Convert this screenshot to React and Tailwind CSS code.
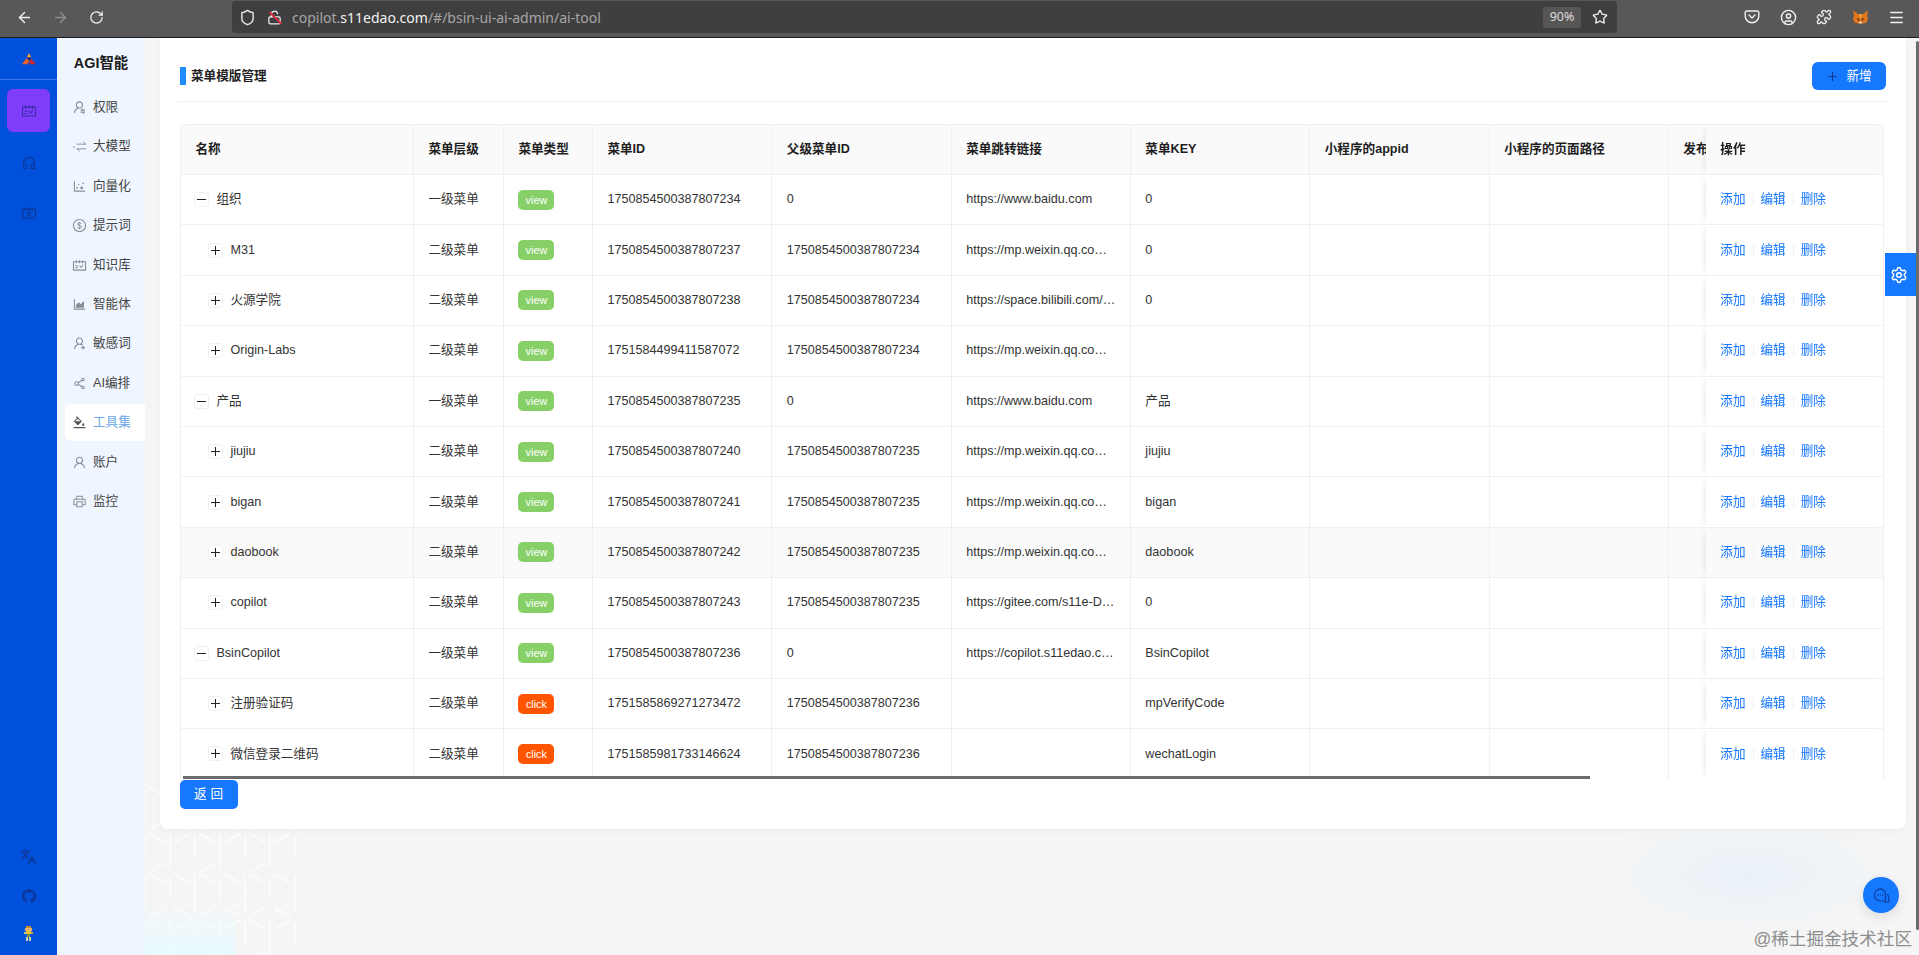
import React from "react";
import { ArrowLeft, ArrowRight, RotateCw, Shield, LockOpen, Star, CircleUser, Puzzle, Menu, Settings, Languages } from "lucide-react";
import {
  AiOutlineUserSwitch, AiOutlineDotChart, AiOutlineDollar, AiOutlineSchedule, AiOutlineAreaChart,
  AiOutlineUserAdd, AiOutlineShareAlt, AiOutlineBgColors, AiOutlineUser, AiOutlinePrinter,
  AiOutlineCustomerService, AiOutlineContacts, AiFillGithub, AiOutlinePlus,
} from "react-icons/ai";

const SwapIcon = (p) => (
  <svg viewBox="0 0 16 16" fill="none" stroke="currentColor" strokeWidth="1" {...p}>
    <path d="M5 5.5h10M12 3l2.6 2.5M1 8.5h2M5 10.5h10M8 13L5.4 10.5" />
  </svg>
);

const Logo = () => (
  <svg viewBox="0 0 18 16" className="w-4 h-[14px]">
    <path d="M9 1l2.5 5H6.5z" fill="#f59e2c" />
    <path d="M6 7l-5 7h6l3-4z" fill="#e8622a" />
    <path d="M11 7l6 7H9z" fill="#c9252d" />
    <path d="M6.5 6.5h5l-2.5 4z" fill="#2d2a6e" />
  </svg>
);

const Avatar = () => (
  <svg viewBox="0 0 12 16" className="w-[11px] h-[17px]" shapeRendering="crispEdges">
    <rect x="3" y="0" width="6" height="2" fill="#c98a2b" />
    <rect x="2" y="2" width="8" height="3" fill="#e2b56a" />
    <rect x="3" y="5" width="6" height="4" fill="#e8c23a" />
    <rect x="1" y="6" width="2" height="3" fill="#b9c98a" />
    <rect x="9" y="6" width="2" height="3" fill="#d9a531" />
    <rect x="4" y="9" width="4" height="3" fill="#7a8f3c" />
    <rect x="3" y="12" width="2" height="4" fill="#cfe0a0" />
    <rect x="7" y="12" width="2" height="4" fill="#cfe0a0" />
  </svg>
);

const Fox = () => (
  <svg viewBox="0 0 18 16" className="w-[17px] h-[16px]">
    <path d="M1 1l6 4h4l6-4-1 6 1 3-2 4-4 1H7l-4-1-2-4 1-3z" fill="#e2761b" />
    <path d="M5 9l3 1-1 3zM13 9l-3 1 1 3z" fill="#5b3a1e" />
    <path d="M7 13h4l-1 2H8z" fill="#f0d9c0" />
    <path d="M7 5h4l-2 4z" fill="#f6a14a" />
  </svg>
);

const Pocket = () => (
  <svg viewBox="0 0 16 16" fill="none" stroke="#f0f0f0" strokeWidth="1.4" className="w-4 h-4">
    <path d="M2.5 2h11a1.3 1.3 0 0 1 1.3 1.3V7a6.8 6.8 0 0 1-13.6 0V3.3A1.3 1.3 0 0 1 2.5 2z" />
    <path d="M5 6l3 3 3-3" strokeLinecap="round" strokeLinejoin="round" />
  </svg>
);

const ChatIcon = () => (
  <svg viewBox="0 0 18 18" fill="none" stroke="#0a3f9e" strokeWidth="1.2" className="w-[17px] h-[17px]">
    <path d="M8 2a6.4 6.4 0 1 0 0 12.8h5.2v-6.4A6.4 6.4 0 0 0 8 2z" />
    <path d="M15 7.5a4.6 4.6 0 0 1 1.6 3.4v5h-4.8" />
    <path d="M5.4 8.4h.1M8 8.4h.1M10.6 8.4h.1" strokeWidth="1.5" strokeLinecap="round" />
  </svg>
);

const menu = [
  ["权限", AiOutlineUserSwitch],
  ["大模型", SwapIcon],
  ["向量化", AiOutlineDotChart],
  ["提示词", AiOutlineDollar],
  ["知识库", AiOutlineSchedule],
  ["智能体", AiOutlineAreaChart],
  ["敏感词", AiOutlineUserAdd],
  ["AI编排", AiOutlineShareAlt],
  ["工具集", AiOutlineBgColors, true],
  ["账户", AiOutlineUser],
  ["监控", AiOutlinePrinter],
];

const U = "https://mp.weixin.qq.com/s/bsin-copilot-menu-template";
const rows = [
  { l: 1, name: "组织", level: "一级菜单", type: "view", id: "1750854500387807234", pid: "0", url: "https://www.baidu.com", key: "0" },
  { l: 2, name: "M31", level: "二级菜单", type: "view", id: "1750854500387807237", pid: "1750854500387807234", url: U, key: "0" },
  { l: 2, name: "火源学院", level: "二级菜单", type: "view", id: "1750854500387807238", pid: "1750854500387807234", url: "https://space.bilibili.com/1234567890/video", key: "0" },
  { l: 2, name: "Origin-Labs", level: "二级菜单", type: "view", id: "1751584499411587072", pid: "1750854500387807234", url: U, key: "" },
  { l: 1, name: "产品", level: "一级菜单", type: "view", id: "1750854500387807235", pid: "0", url: "https://www.baidu.com", key: "产品" },
  { l: 2, name: "jiujiu", level: "二级菜单", type: "view", id: "1750854500387807240", pid: "1750854500387807235", url: U, key: "jiujiu" },
  { l: 2, name: "bigan", level: "二级菜单", type: "view", id: "1750854500387807241", pid: "1750854500387807235", url: U, key: "bigan" },
  { l: 2, name: "daobook", level: "二级菜单", type: "view", id: "1750854500387807242", pid: "1750854500387807235", url: U, key: "daobook", hover: true },
  { l: 2, name: "copilot", level: "二级菜单", type: "view", id: "1750854500387807243", pid: "1750854500387807235", url: "https://gitee.com/s11e-DAO/bsin-copilot", key: "0" },
  { l: 1, name: "BsinCopilot", level: "一级菜单", type: "view", id: "1750854500387807236", pid: "0", url: "https://copilot.s11edao.com/#/bsin-ui", key: "BsinCopilot" },
  { l: 2, name: "注册验证码", level: "二级菜单", type: "click", id: "1751585869271273472", pid: "1750854500387807236", url: "", key: "mpVerifyCode" },
  { l: 2, name: "微信登录二维码", level: "二级菜单", type: "click", id: "1751585981733146624", pid: "1750854500387807236", url: "", key: "wechatLogin" },
];

const heads = ["名称", "菜单层级", "菜单类型", "菜单ID", "父级菜单ID", "菜单跳转链接", "菜单KEY", "小程序的appid", "小程序的页面路径", "发布"];

const th = "h-[50px] px-[14.4px] text-left font-semibold text-[12.6px] text-[#1f1f1f] bg-[#fafafa] border-b border-r border-[#f0f0f0] whitespace-nowrap overflow-hidden";
const cell = "px-[14.4px] text-[12.6px] border-b border-r border-[#f0f0f0] whitespace-nowrap overflow-hidden text-ellipsis";
const td = `${cell} text-[#333333]`;

function Expander({ open }) {
  return (
    <span className="w-[15px] h-[15px] rounded-[3px] border border-[#f0f0f0] bg-white flex items-center justify-center shrink-0 relative">
      <span className="w-[9px] h-px bg-[#222222]" />
      {!open && <span className="absolute w-px h-[9px] bg-[#222222]" />}
    </span>
  );
}

function Row({ r }) {
  const bg = r.hover ? "bg-[#fafafa]" : "bg-white";
  return (
    <tr className="h-[50.4px]">
      <td className={`${td} ${bg}`}>
        <div className={`flex items-center ${r.l === 1 ? "gap-[7px]" : "gap-[7px] pl-[14px]"}`}>
          <Expander open={r.l === 1} />
          <span>{r.name}</span>
        </div>
      </td>
      <td className={`${td} ${bg}`}>{r.level}</td>
      <td className={`${td} ${bg}`}>
        <span className={`inline-flex items-center justify-center w-9 h-5 rounded-[5px] text-[10.8px] text-white align-middle ${r.type === "view" ? "bg-[#87d068]" : "bg-[#ff5500]"}`}>
          {r.type}
        </span>
      </td>
      <td className={`${td} ${bg}`}>{r.id}</td>
      <td className={`${td} ${bg}`}>{r.pid}</td>
      <td className={`${td} ${bg}`}>{r.url}</td>
      <td className={`${td} ${bg}`}>{r.key}</td>
      <td className={`${td} ${bg}`}></td>
      <td className={`${td} ${bg}`}></td>
      <td className={`${td} ${bg}`}></td>
      <td className={`${cell} ${bg} sticky right-0 shadow-[-6px_0_6px_-4px_rgba(0,0,0,0.07)] text-[#1677ff] overflow-visible`}>
        <div className="flex items-center">
          <span>添加</span>
          <span className="w-px h-[11px] bg-[#f0f0f0] mx-[7px]" />
          <span>编辑</span>
          <span className="w-px h-[11px] bg-[#f0f0f0] mx-[7px]" />
          <span>删除</span>
        </div>
      </td>
    </tr>
  );
}

export default function App() {
  return (
    <div className="h-screen w-full flex flex-col overflow-hidden font-['Liberation_Sans','Noto_Sans_CJK_SC',sans-serif]">
      {/* browser toolbar */}
      <div className="h-[38px] shrink-0 bg-[#585858] border-b border-[#1c1c1c] flex items-start pl-[6px] pr-[5px] font-['Noto_Sans','Noto_Sans_CJK_SC',sans-serif]">
        <div className="w-9 h-[34px] flex items-center justify-center"><ArrowLeft size={17} color="#f2f2f2" /></div>
        <div className="w-9 h-[34px] flex items-center justify-center"><ArrowRight size={17} color="#8f8f8f" /></div>
        <div className="w-9 h-[34px] flex items-center justify-center"><RotateCw size={15} color="#f2f2f2" /></div>
        <div className="ml-[118px] mt-px w-[1385px] h-[32px] bg-[#3f3f3f] rounded-[4px] flex items-center pl-[7px] pr-[7px]">
          <Shield size={17} color="#e6e6e6" />
          <span className="relative ml-[11px] w-[15px] flex justify-center">
            <LockOpen size={15} color="#eeeeee" />
            <span className="absolute left-0 top-[7px] w-[17px] h-[1.5px] bg-[#d8293f] rotate-45" />
          </span>
          <span className="ml-[10px] text-[14px] text-[#a6a6a6] whitespace-nowrap">
            copilot.<span className="text-[#f2f2f2]">s11edao.com</span>/#/bsin-ui-ai-admin/ai-tool
          </span>
          <span className="ml-auto w-[38px] h-[21px] rounded-[3px] bg-[#565656] text-[12.5px] text-[#dddddd] flex items-center justify-center">90%</span>
          <Star size={16} color="#eeeeee" className="ml-[11px] mr-[2px]" />
        </div>
        <div className="ml-auto flex">
          <div className="w-9 h-[34px] flex items-center justify-center"><Pocket /></div>
          <div className="w-9 h-[34px] flex items-center justify-center"><CircleUser size={17} color="#f0f0f0" /></div>
          <div className="w-9 h-[34px] flex items-center justify-center"><Puzzle size={16} color="#f0f0f0" /></div>
          <div className="w-9 h-[34px] flex items-center justify-center"><Fox /></div>
          <div className="w-9 h-[34px] flex items-center justify-center"><Menu size={17} color="#f0f0f0" /></div>
        </div>
      </div>

      <div className="flex-1 min-h-0 flex">
        {/* icon rail */}
        <div className="w-[57px] shrink-0 bg-[#0050dc] flex flex-col items-center">
          <div className="w-full h-[42px] flex items-center justify-center border-b border-[#3b78e8]"><Logo /></div>
          <div className="mt-[9px] w-[43px] h-[43px] rounded-[6px] bg-[#7f3dfb] flex items-center justify-center">
            <AiOutlineSchedule size={16} color="#3d2aa8" />
          </div>
          <div className="mt-[9px] w-[43px] h-[43px] flex items-center justify-center"><AiOutlineCustomerService size={16} color="#0d3697" /></div>
          <div className="mt-[7px] w-[43px] h-[43px] flex items-center justify-center"><AiOutlineContacts size={16} color="#0d3697" /></div>
          <div className="mt-auto flex flex-col items-center pb-[13px]">
            <Languages size={17} color="#0d3697" />
            <AiFillGithub size={16} color="#0d3697" className="mt-[23px]" />
            <div className="mt-[21px]"><Avatar /></div>
          </div>
        </div>

        {/* sub menu */}
        <div className="w-[88px] shrink-0 bg-[#eff6ff] flex flex-col items-stretch pl-[8px]">
          <div className="h-[51px] flex items-center justify-center pr-[8px] text-[14.4px] font-semibold text-[#1c1c1c]">AGI智能</div>
          {menu.map(([t, Icon, active]) => (
            <div
              key={t}
              className={`h-[37px] mb-[2.4px] flex items-center pl-[7px] gap-[6px] rounded-l-[6px] text-[12.6px] ${active ? "bg-white text-[#6aa6e6]" : "text-[#444444]"}`}
            >
              <Icon className={`w-[15px] h-[15px] ${active ? "text-[#555555]" : "text-[#8a8f96]"}`} />
              <span>{t}</span>
            </div>
          ))}
        </div>

        {/* main pane */}
        <div className="relative flex-1 min-w-0 bg-[#f5f5f5] pl-[15px] overflow-hidden">
          {/* decorative backdrop */}
          <svg className="absolute left-0 bottom-0 w-[155px] h-[170px]" aria-hidden="true">
            <defs>
              <pattern id="hex" width="50" height="86.6" patternUnits="userSpaceOnUse">
                <path
                  d="M0 4v36M25 47v36M50 4v36M4 45l17-10M29 2l17 10M29 41l17-10M4 2l17 10M4 88l17-10M46 45L29 35M29 58l17-10M21 58L4 48M25 6v22M0 50v22M50 50v22"
                  fill="none"
                  stroke="#ffffff"
                  strokeWidth="1.6"
                  opacity="0.7"
                />
              </pattern>
              <linearGradient id="cy" x1="0" y1="1" x2="0" y2="0">
                <stop offset="0" stopColor="#e8fbff" />
                <stop offset="0.3" stopColor="#e8fbff" stopOpacity="0" />
              </linearGradient>
            </defs>
            <rect width="155" height="170" fill="url(#hex)" />
            <rect width="90" height="170" fill="url(#cy)" />
          </svg>
          <div className="absolute right-[10px] bottom-[15px] w-[320px] h-[130px] bg-[radial-gradient(closest-side,#e9f1f8,#f5f5f500)]" />

          {/* card */}
          <div className="relative w-[1746px] h-[791px] bg-white rounded-b-[8px] shadow-[0_2px_8px_rgba(0,0,0,0.03)] px-[20px]">
            <div className="-mx-[2px] px-[2px] h-[64px] pt-[13px] border-b border-[#f0f0f0] flex items-center justify-between">
              <div className="flex items-center gap-[5px]">
                <span className="w-[6px] h-[18px] bg-[#1f8fff]" />
                <span className="text-[12.6px] font-semibold text-[#222222]">菜单模版管理</span>
              </div>
              <button className="w-[74px] h-[28px] rounded-[6px] bg-[#1677ff] text-white text-[12.6px] flex items-center justify-center gap-[7px]">
                <AiOutlinePlus size={13} color="#0d3b8e" />
                <span>新增</span>
              </button>
            </div>

            <div className="relative mt-[22px] w-[1704px] h-[655px] overflow-hidden rounded-t-[7px] border-t border-[#f0f0f0] box-border">
              <table className="table-fixed border-separate border-spacing-0 w-[1846px]">
                <colgroup>
                  <col className="w-[234px]" />
                  <col className="w-[90px]" />
                  <col className="w-[89px]" />
                  <col className="w-[179.4px]" />
                  <col className="w-[179.4px]" />
                  <col className="w-[179.2px]" />
                  <col className="w-[179.4px]" />
                  <col className="w-[179.4px]" />
                  <col className="w-[179.2px]" />
                  <col className="w-[179px]" />
                  <col className="w-[178px]" />
                </colgroup>
                <thead>
                  <tr>
                    {heads.map((h, i) => (
                      <th key={h} className={`${th} ${i === 0 ? "border-l" : ""}`}>{h}</th>
                    ))}
                    <th className={`${th} sticky right-0 z-10 shadow-[-6px_0_6px_-4px_rgba(0,0,0,0.07)]`}>操作</th>
                  </tr>
                </thead>
                <tbody>
                  {rows.map((r) => (
                    <Row key={r.id} r={r} />
                  ))}
                </tbody>
              </table>
              <div className="absolute left-[3px] bottom-0 w-[1407px] h-[3px] bg-[#6b6b6b] z-20" />
              <div className="absolute left-0 top-[50px] bottom-0 w-px bg-[#f0f0f0]" />
            </div>

            <button className="mt-px w-[58px] h-[29px] rounded-[5px] bg-[#1677ff] text-white text-[12.6px] tracking-[4px] pl-[3px]">返回</button>
          </div>

          {/* floating widgets */}
          <div className="absolute right-[3px] top-[215px] w-[31px] h-[43px] bg-[#1677ff] flex items-center justify-center pr-[3px]">
            <Settings size={18} color="#ffffff" />
          </div>
          <div className="absolute right-[20px] bottom-[42px] w-9 h-9 rounded-full bg-[#1677ff] shadow-[0_4px_12px_rgba(0,0,0,0.1)] flex items-center justify-center">
            <ChatIcon />
          </div>
          <div className="absolute right-[7px] bottom-[5px] text-[17.6px] leading-[22px] text-[#8d8d8d] whitespace-nowrap">@稀土掘金技术社区</div>
          <div className="absolute right-0 top-[3px] w-[3px] h-[889px] bg-[#6b6b6b] rounded-full" />
        </div>
      </div>
    </div>
  );
}
